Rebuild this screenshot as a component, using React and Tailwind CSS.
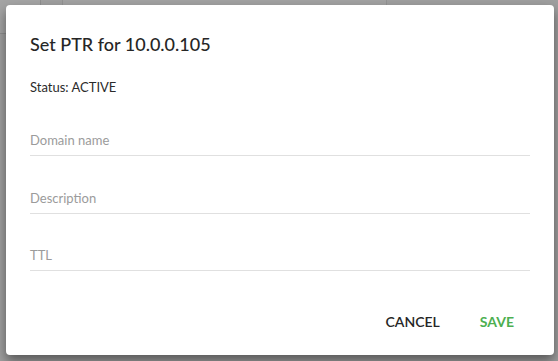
import React from 'react'

function Field({ label }) {
    return (
        <div className="border-b border-[#e0e0e0] pb-[6px]">
            <span className="block text-[13px] leading-[18px] text-[#9b9b9b]">{label}</span>
        </div>
    )
}

export default function App() {
    return (
        <div className="relative w-[558px] h-[361px] overflow-hidden bg-[#9f9f9f]" style={{ fontFamily: 'Lato, "Open Sans", sans-serif' }}>
            {/* page behind the overlay */}
            <div className="absolute left-0 top-0 w-[41px] h-[34px] bg-[#a4a4a4] border-r border-b border-[#8e8e8e]"></div>
            <div className="absolute left-[62px] top-0 w-[325px] h-[6px] border-l border-r border-[#929292] bg-[#a2a2a2]"></div>

            {/* Dialog */}
            <div className="relative ml-[6px] mt-[5px] w-[548px] h-[350px] bg-white rounded-[4px] shadow-[0_6px_12px_rgba(0,0,0,0.45)] flex flex-col px-6 pt-[27px]">
                <h2 className="text-[18px] leading-6 font-medium text-[#262626]">Set PTR for 10.0.0.105</h2>
                <p className="mt-[22px] text-[13px] leading-[18px] text-[#2b2b2b]">Status: ACTIVE</p>

                <div className="mt-[35px] flex flex-col gap-[32.5px]">
                    <Field label="Domain name" />
                    <Field label="Description" />
                    <Field label="TTL" />
                </div>

                <div className="mt-[41px] flex justify-end gap-2">
                    <button className="px-4 text-[14px] leading-5 font-semibold text-[#262626]">CANCEL</button>
                    <button className="px-4 text-[14px] leading-5 font-bold text-[#4caf50]">SAVE</button>
                </div>
            </div>
        </div>
    )
}
